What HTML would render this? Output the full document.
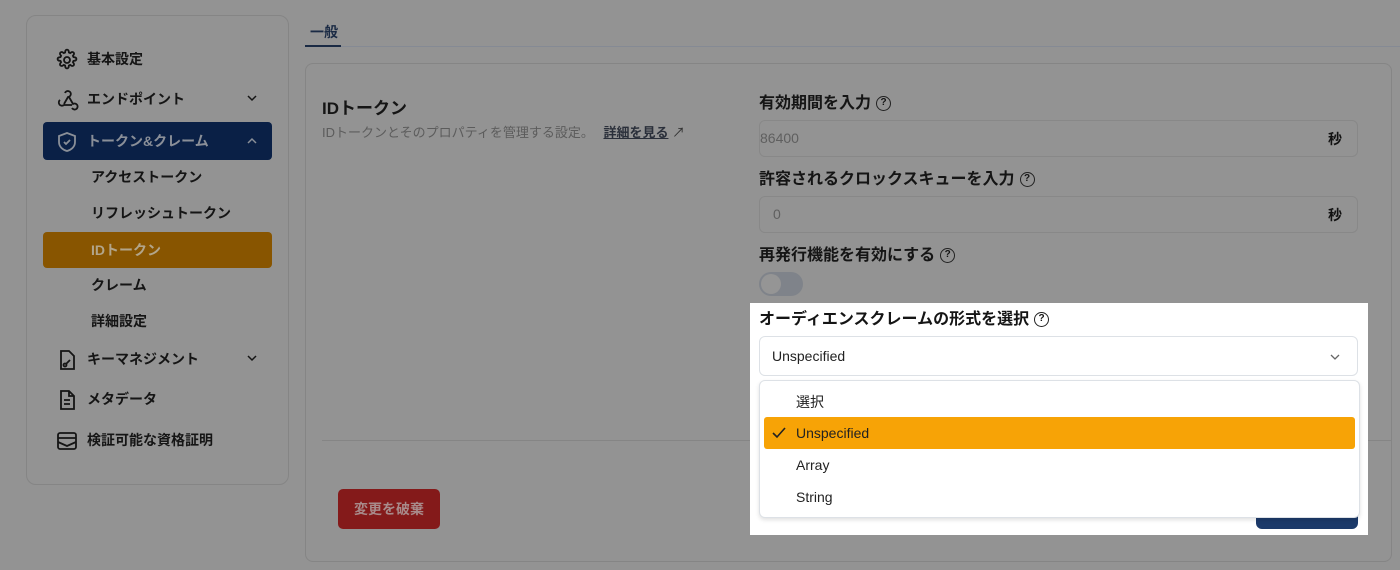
<!DOCTYPE html>
<html><head><meta charset="utf-8"><style>
*{box-sizing:border-box;margin:0;padding:0}
body{width:1400px;height:570px;background:#939393;font-family:"Liberation Sans","Noto Sans CJK JP",sans-serif;position:relative;overflow:hidden;color:#111}
.a{position:absolute}
.side{left:26px;top:15px;width:263px;height:470px;border:1px solid #858585;border-radius:10px}
.it{position:absolute;left:16px;width:229px;height:38px;border-radius:4px;font-size:14px;font-weight:bold;display:flex;align-items:center;padding-left:44px;color:#151515}
.it svg{position:absolute;left:12px;top:8px}
.sub{padding-left:48px;height:34px}
.chev{position:absolute;right:14px;top:12px}
.q{display:inline-block;width:15px;height:15px;border:1.5px solid #222;border-radius:50%;font-size:10px;text-align:center;line-height:12px;margin-left:5px;vertical-align:middle;font-weight:bold}
.lbl{font-size:16px;font-weight:bold;color:#151515;line-height:18px}
.inp{left:759px;width:599px;height:37px;border:1px solid #888;border-radius:6px}
</style></head><body>
<div class="a side">
 <div class="it" style="top:24px"><svg width="24" height="24" viewBox="0 0 24 24" fill="none" stroke="#151515" stroke-width="1.8"><circle cx="12" cy="12" r="3"/><path d="M10.3 3.3a1.7 1.7 0 0 1 3.4 0l.2 1.2 1.3.6 1-.7a1.7 1.7 0 0 1 2.4 2.4l-.7 1 .6 1.3 1.2.2a1.7 1.7 0 0 1 0 3.4l-1.2.2-.6 1.3.7 1a1.7 1.7 0 0 1-2.4 2.4l-1-.7-1.3.6-.2 1.2a1.7 1.7 0 0 1-3.4 0l-.2-1.2-1.3-.6-1 .7a1.7 1.7 0 0 1-2.4-2.4l.7-1-.6-1.3-1.2-.2a1.7 1.7 0 0 1 0-3.4l1.2-.2.6-1.3-.7-1a1.7 1.7 0 0 1 2.4-2.4l1 .7 1.3-.6z"/></svg>基本設定</div>
 <div class="it" style="top:64px"><svg width="24" height="24" viewBox="0 0 24 24" fill="none" stroke="#151515" stroke-width="1.8"><path d="M10 5a3 3 0 1 1 3 4l-4 7M5 12a3 3 0 1 0 4 5h8M14 9l4 7a3 3 0 1 1-1 4"/></svg>エンドポイント<svg class="chev" style="left:auto;top:14px" width="12" height="8" viewBox="0 0 12 8"><path d="M2 2l4 4 4-4" stroke="#151515" stroke-width="1.5" fill="none"/></svg></div>
 <div class="it" style="top:106px;background:#0a2046;color:#8a8f98"><svg width="24" height="24" viewBox="0 0 24 24" fill="none" stroke="#8a8f98" stroke-width="1.8"><path d="M12 3l8 3v6c0 5-4 8-8 9-4-1-8-4-8-9V6z"/><path d="M9 12l2 2 4-4"/></svg>トークン&amp;クレーム<svg class="chev" style="left:auto;top:15px" width="12" height="8" viewBox="0 0 12 8"><path d="M2 6l4-4 4 4" stroke="#8a8f98" stroke-width="1.5" fill="none"/></svg></div>
 <div class="it sub" style="top:144px">アクセストークン</div>
 <div class="it sub" style="top:180px">リフレッシュトークン</div>
 <div class="it sub" style="top:216px;height:36px;background:#885500;color:#b2a58a">IDトークン</div>
 <div class="it sub" style="top:252px">クレーム</div>
 <div class="it sub" style="top:288px">詳細設定</div>
 <div class="it" style="top:324px"><svg width="24" height="24" viewBox="0 0 24 24" fill="none" stroke="#151515" stroke-width="1.8"><path d="M14 3H6v18h13V8z"/><circle cx="10" cy="17" r="1.5"/><path d="M11 16l4-4"/></svg>キーマネジメント<svg class="chev" style="left:auto;top:14px" width="12" height="8" viewBox="0 0 12 8"><path d="M2 2l4 4 4-4" stroke="#151515" stroke-width="1.5" fill="none"/></svg></div>
 <div class="it" style="top:364px"><svg width="24" height="24" viewBox="0 0 24 24" fill="none" stroke="#151515" stroke-width="1.8"><path d="M14 3H6v18h13V8zM14 3v5h5M9 12h6M9 16h6"/></svg>メタデータ</div>
 <div class="it" style="top:405px"><svg width="24" height="24" viewBox="0 0 24 24" fill="none" stroke="#151515" stroke-width="1.8"><rect x="3" y="4" width="18" height="16" rx="2"/><path d="M3 9h18M3 13l9 4 9-4"/></svg>検証可能な資格証明</div>
</div>

<div class="a" style="left:310px;top:22px;font-size:14px;font-weight:bold;color:#1a2a44">一般</div>
<div class="a" style="left:305px;top:46px;width:1095px;height:1px;background:#858a94"></div>
<div class="a" style="left:305px;top:45px;width:36px;height:2px;background:#1a2a44"></div>

<div class="a" style="left:305px;top:63px;width:1087px;height:499px;border:1px solid #858585;border-radius:8px"></div>
<div class="a" style="left:322px;top:94px;font-size:17px;font-weight:bold;color:#151515">IDトークン</div>
<div class="a" style="left:322px;top:122px;font-size:13px;color:#5c5c5c">IDトークンとそのプロパティを管理する設定。 <span style="color:#2a2f3a;text-decoration:underline;font-weight:bold;margin-left:6px">詳細を見る</span> <span style="color:#333">↗</span></div>

<div class="a lbl" style="left:759px;top:95px">有効期間を入力<span class="q">?</span></div>
<div class="a inp" style="top:120px"></div>
<div class="a" style="left:760px;top:130px;font-size:14px;color:#5f5f5f">86400</div>
<div class="a" style="left:1328px;top:129px;font-size:14px;font-weight:bold">秒</div>

<div class="a lbl" style="left:759px;top:171px">許容されるクロックスキューを入力<span class="q">?</span></div>
<div class="a inp" style="top:196px"></div>
<div class="a" style="left:773px;top:206px;font-size:14px;color:#5f5f5f">0</div>
<div class="a" style="left:1328px;top:205px;font-size:14px;font-weight:bold">秒</div>

<div class="a lbl" style="left:759px;top:247px">再発行機能を有効にする<span class="q">?</span></div>
<div class="a" style="left:759px;top:272px;width:44px;height:24px;border-radius:12px;background:#7f838a"></div>
<div class="a" style="left:761px;top:274px;width:20px;height:20px;border-radius:50%;background:#959595"></div>

<div class="a" style="left:322px;top:440px;width:1070px;height:1px;background:#858585"></div>
<div class="a" style="left:338px;top:489px;width:102px;height:40px;border-radius:5px;background:#841a1a;color:#a88a8a;font-size:14px;font-weight:bold;text-align:center;line-height:40px">変更を破棄</div>

<div class="a" style="left:750px;top:303px;width:618px;height:232px;background:#fff"></div>
<div class="a" style="left:1256px;top:500px;width:102px;height:29px;background:#1c3a6a;border-radius:0 0 6px 6px"></div>
<div class="a lbl" style="left:759px;top:311px">オーディエンスクレームの形式を選択<span class="q">?</span></div>
<div class="a" style="left:759px;top:336px;width:599px;height:40px;border:1px solid #dde1e6;border-radius:6px;font-size:14px;color:#222;padding:11px 12px">Unspecified
 <svg class="a" style="right:16px;top:16px" width="12" height="8" viewBox="0 0 12 8"><path d="M2 2l4 4 4-4" stroke="#666" stroke-width="1.3" fill="none"/></svg></div>
<div class="a" style="left:759px;top:380px;width:601px;height:138px;border:1px solid #dde1e6;border-radius:6px;background:#fff;box-shadow:0 2px 4px rgba(0,0,0,.12)">
 <div class="a" style="left:36px;top:11px;font-size:14px;color:#222">選択</div>
 <div class="a" style="left:4px;top:36px;width:591px;height:32px;background:#f7a306;border-radius:3px;font-size:14px;color:#222"><svg class="a" style="left:8px;top:10px" width="14" height="12" viewBox="0 0 14 12"><path d="M1 6l4 4 8-9" stroke="#222" stroke-width="1.6" fill="none"/></svg><span class="a" style="left:32px;top:8px">Unspecified</span></div>
 <div class="a" style="left:36px;top:76px;font-size:14px;color:#222">Array</div>
 <div class="a" style="left:36px;top:108px;font-size:14px;color:#222">String</div>
</div>
</body></html>
